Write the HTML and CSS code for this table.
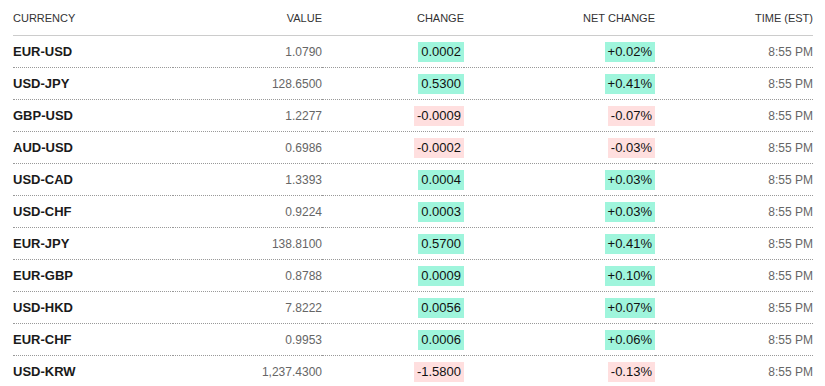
FILE: index.html
```html
<!DOCTYPE html>
<html lang="en">
<head>
    <meta charset="UTF-8">
    <meta name="viewport" content="width=device-width, initial-scale=1.0">
    <title>Currencies</title>
    <link rel="stylesheet" href="styles.css">
</head>
<body>
    <div class="quote-section">
        <table class="quote-table">
            <colgroup>
                <col class="col-name">
                <col class="col-value">
                <col class="col-change">
                <col class="col-net">
                <col class="col-time">
            </colgroup>
            <thead>
                <tr>
                    <th class="left">Currency</th>
                    <th>Value</th>
                    <th>Change</th>
                    <th>Net Change</th>
                    <th>Time (EST)</th>
                </tr>
            </thead>
            <tbody>
                <tr>
                    <td class="name">EUR-USD</td>
                    <td class="value">1.0790</td>
                    <td><span class="badge up">0.0002</span></td>
                    <td><span class="badge up">+0.02%</span></td>
                    <td class="time">8:55 PM</td>
                </tr>
                <tr>
                    <td class="name">USD-JPY</td>
                    <td class="value">128.6500</td>
                    <td><span class="badge up">0.5300</span></td>
                    <td><span class="badge up">+0.41%</span></td>
                    <td class="time">8:55 PM</td>
                </tr>
                <tr>
                    <td class="name">GBP-USD</td>
                    <td class="value">1.2277</td>
                    <td><span class="badge down">-0.0009</span></td>
                    <td><span class="badge down">-0.07%</span></td>
                    <td class="time">8:55 PM</td>
                </tr>
                <tr>
                    <td class="name">AUD-USD</td>
                    <td class="value">0.6986</td>
                    <td><span class="badge down">-0.0002</span></td>
                    <td><span class="badge down">-0.03%</span></td>
                    <td class="time">8:55 PM</td>
                </tr>
                <tr>
                    <td class="name">USD-CAD</td>
                    <td class="value">1.3393</td>
                    <td><span class="badge up">0.0004</span></td>
                    <td><span class="badge up">+0.03%</span></td>
                    <td class="time">8:55 PM</td>
                </tr>
                <tr>
                    <td class="name">USD-CHF</td>
                    <td class="value">0.9224</td>
                    <td><span class="badge up">0.0003</span></td>
                    <td><span class="badge up">+0.03%</span></td>
                    <td class="time">8:55 PM</td>
                </tr>
                <tr>
                    <td class="name">EUR-JPY</td>
                    <td class="value">138.8100</td>
                    <td><span class="badge up">0.5700</span></td>
                    <td><span class="badge up">+0.41%</span></td>
                    <td class="time">8:55 PM</td>
                </tr>
                <tr>
                    <td class="name">EUR-GBP</td>
                    <td class="value">0.8788</td>
                    <td><span class="badge up">0.0009</span></td>
                    <td><span class="badge up">+0.10%</span></td>
                    <td class="time">8:55 PM</td>
                </tr>
                <tr>
                    <td class="name">USD-HKD</td>
                    <td class="value">7.8222</td>
                    <td><span class="badge up">0.0056</span></td>
                    <td><span class="badge up">+0.07%</span></td>
                    <td class="time">8:55 PM</td>
                </tr>
                <tr>
                    <td class="name">EUR-CHF</td>
                    <td class="value">0.9953</td>
                    <td><span class="badge up">0.0006</span></td>
                    <td><span class="badge up">+0.06%</span></td>
                    <td class="time">8:55 PM</td>
                </tr>
                <tr>
                    <td class="name">USD-KRW</td>
                    <td class="value">1,237.4300</td>
                    <td><span class="badge down">-1.5800</span></td>
                    <td><span class="badge down">-0.13%</span></td>
                    <td class="time">8:55 PM</td>
                </tr>
            </tbody>
        </table>
    </div>
</body>
</html>
```

FILE: styles.css
```css
body {
    font-family: 'Liberation Sans', Arial, sans-serif;
    margin: 0;
    padding: 0;
    background-color: #fff;
    color: #1a1a1a;
}

/* Quote Table */
.quote-section {
    padding: 0 12px 0 13px;
}

.quote-table {
    width: 800px;
    border-collapse: separate;
    border-spacing: 0;
    table-layout: fixed;
}

.col-name { width: 160px; }
.col-value { width: 149px; }
.col-change { width: 142px; }
.col-net { width: 191px; }
.col-time { width: 158px; }

.quote-table th {
    font-size: 11px;
    font-weight: 400;
    line-height: 12px;
    text-transform: uppercase;
    color: #333;
    text-align: right;
    padding: 12px 0 11px;
    border-bottom: 1px solid #ccc;
}

.quote-table th.left {
    text-align: left;
}

.quote-table td {
    height: 31px;
    padding: 0;
    text-align: right;
    vertical-align: middle;
    font-size: 13px;
    border-bottom: 1px dotted #999;
}

.quote-table td.name {
    text-align: left;
    font-weight: 700;
    color: #1a1a1a;
}

.quote-table td.value,
.quote-table td.time {
    font-size: 12px;
    color: #666;
}

/* Change Badges */
.badge {
    display: inline-block;
    line-height: 20px;
    padding: 0 3px;
    color: #111;
    vertical-align: middle;
}

.badge.up {
    background-color: #9ff5dc;
}

.badge.down {
    background-color: #ffdfdf;
}
```
